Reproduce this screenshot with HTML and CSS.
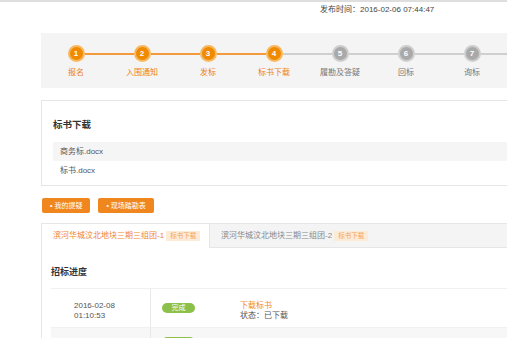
FILE: index.html
```html
<!DOCTYPE html>
<html lang="zh-CN">
<head>
<meta charset="utf-8">
<title>标书下载</title>
<link rel="stylesheet" href="styles.css">
</head>
<body>
<div class="topline"></div>
<div class="page">
  <div class="pubtime">发布时间：2016-02-06 07:44:47</div>

  <div class="steps">
    <div class="step done first"><div class="bar"><span class="seg"></span><span class="dot">1</span><span class="seg"></span></div><div class="lbl">报名</div></div>
    <div class="step done"><div class="bar"><span class="seg"></span><span class="dot">2</span><span class="seg"></span></div><div class="lbl">入围通知</div></div>
    <div class="step done"><div class="bar"><span class="seg"></span><span class="dot">3</span><span class="seg"></span></div><div class="lbl">发标</div></div>
    <div class="step done cur"><div class="bar"><span class="seg"></span><span class="dot">4</span><span class="seg"></span></div><div class="lbl">标书下载</div></div>
    <div class="step"><div class="bar"><span class="seg"></span><span class="dot">5</span><span class="seg"></span></div><div class="lbl">履勘及答疑</div></div>
    <div class="step"><div class="bar"><span class="seg"></span><span class="dot">6</span><span class="seg"></span></div><div class="lbl">回标</div></div>
    <div class="step"><div class="bar"><span class="seg"></span><span class="dot">7</span><span class="seg"></span></div><div class="lbl">询标</div></div>
    <div class="tail"></div>
  </div>

  <div class="panel files">
    <div class="ptitle">标书下载</div>
    <div class="frow alt">商务标.docx</div>
    <div class="frow">标书.docx</div>
  </div>

  <div class="btns">
    <span class="btn">• 我的提疑</span>
    <span class="btn">• 现场踏勘表</span>
  </div>

  <div class="panel tabs">
    <div class="tabbar">
      <div class="tab active">滨河华城汶北地块三期三组团-1<span class="tag">标书下载</span></div>
      <div class="tab">滨河华城汶北地块三期三组团-2<span class="tag">标书下载</span></div>
    </div>
    <div class="tabbody">
      <div class="ptitle small">招标进度</div>
      <div class="tl">
        <div class="tlrow">
          <div class="c1">2016-02-08<br>01:10:53</div>
          <div class="c2"><span class="ok">完成</span></div>
          <div class="c3"><div class="act">下载标书</div><div>状态：已下载</div></div>
        </div>
        <div class="tlrow alt">
          <div class="c1"></div>
          <div class="c2 next"><span class="ok"></span></div>
          <div class="c3"></div>
        </div>
      </div>
    </div>
  </div>
</div>
</body>
</html>
```
FILE: styles.css
```css
html, body {
  margin: 0;
  padding: 0;
  overflow: hidden;
  background: #fff;
}
body {
  font-family: "Liberation Sans", "Noto Sans CJK SC", sans-serif;
  color: #555;
  font-size: 8px;
  width: 507px;
  height: 338px;
}
.topline {
  height: 2px;
  background: #dedede;
}
.page {
  width: 640px;
  margin-left: 41px;
}
.pubtime {
  padding-left: 279px;
  margin-top: 3px;
  line-height: 10px;
  height: 10px;
  color: #444;
}
.steps {
  margin-top: 18px;
  height: 55px;
  background: #f4f4f4;
  display: flex;
  padding-left: 2px;
  padding-top: 12px;
  box-sizing: border-box;
}
.step {
  width: 66px;
  flex: none;
  display: flex;
  flex-direction: column;
  align-items: center;
}
.tail {
  flex: 1;
  height: 2px;
  margin-top: 7.5px;
  background: #cfcfcf;
}
.bar {
  display: flex;
  align-items: center;
  width: 100%;
  height: 17px;
}
.seg {
  flex: 1;
  height: 2px;
  background: #cfcfcf;
}
.dot {
  width: 13px;
  height: 13px;
  border-radius: 50%;
  background: #a9a9a9;
  border: 2px solid #cdcdcd;
  color: #fff;
  font-weight: bold;
  font-size: 8px;
  line-height: 13px;
  text-align: center;
  flex: none;
}
.done .seg {
  background: #f29a3c;
}
.done .dot {
  background: #f08a00;
  border-color: #f6b860;
}
.cur .seg:last-child {
  background: #cfcfcf;
}
.first .seg:first-child {
  background: transparent;
}
.lbl {
  margin-top: 6px;
  line-height: 10px;
  color: #777;
  white-space: nowrap;
}
.done .lbl {
  color: #ee7f16;
}
.panel {
  border: 1px solid #e6e6e6;
  background: #fff;
}
.files {
  margin-top: 12px;
  padding: 18px 0 5px 11px;
  height: 86px;
  box-sizing: border-box;
}
.ptitle {
  font-size: 9.5px;
  font-weight: bold;
  color: #333;
  line-height: 12px;
  margin-bottom: 11px;
}
.frow {
  height: 19px;
  line-height: 19px;
  padding-left: 7px;
  color: #555;
}
.frow.alt {
  background: #f5f5f5;
}
.btns {
  margin-top: 12px;
  display: flex;
  gap: 8px;
  padding-left: 1px;
}
.btn {
  height: 15px;
  line-height: 15px;
  padding: 0 8px;
  background: #f0871e;
  color: #fff;
  font-size: 7px;
  border-radius: 2px;
}
.tabs {
  margin-top: 10px;
  height: 140px;
}
.tabbar {
  display: flex;
  height: 24px;
}
.tab {
  line-height: 24px;
  padding-left: 11px;
  color: #888;
  background: #f4f4f4;
  border-bottom: 1px solid #e6e6e6;
  border-left: 1px solid #e6e6e6;
  flex: 1;
  white-space: nowrap;
}
.tab.active {
  flex: none;
  width: 167px;
  box-sizing: border-box;
  background: #fff;
  border: none;
  color: #f0862a;
}
.tag {
  display: inline-block;
  margin-left: 2px;
  padding: 0 4px;
  height: 10px;
  line-height: 10px;
  font-size: 6.5px;
  background: #fde9d4;
  color: #f08a24;
}
.tab .tag {
  background: #fcebd6;
  color: #f5a452;
}
.tabbody {
  padding: 18px 0 0 9px;
}
.ptitle.small {
  font-size: 9px;
  margin-bottom: 10px;
}
.tlrow {
  display: flex;
  height: 38px;
  border-top: 1px solid #f0f0f0;
}
.tlrow.alt {
  background: #f7f7f7;
}
.c1 {
  width: 100px;
  flex: none;
  box-sizing: border-box;
  padding: 12px 0 0 23px;
  line-height: 10px;
  border-right: 1px solid #e8e8e8;
  color: #555;
}
.c2 {
  width: 89px;
  flex: none;
  box-sizing: border-box;
  padding: 14px 0 0 11px;
}
.c2.next {
  padding-top: 9px;
}
.ok {
  display: inline-block;
  vertical-align: top;
  width: 33px;
  height: 10px;
  line-height: 10px;
  border-radius: 5px;
  background: #8dc04a;
  color: #fff;
  font-size: 7px;
  text-align: center;
}
.c3 {
  padding-top: 12px;
  line-height: 10px;
  color: #555;
}
.act {
  color: #f08a1e;
}
```
